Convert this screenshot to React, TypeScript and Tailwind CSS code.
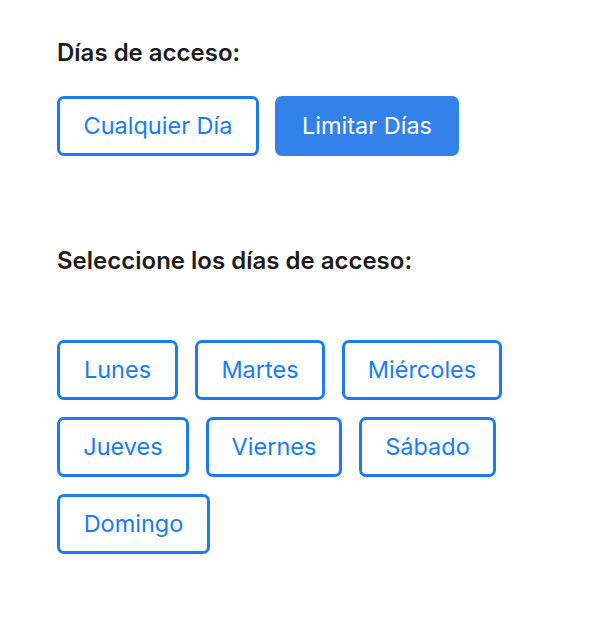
import { useState } from "react";

const days = [
  { name: "Lunes", w: "w-[121px]" },
  { name: "Martes", w: "w-[130px]" },
  { name: "Miércoles", w: "w-[160px]" },
  { name: "Jueves", w: "w-[132px]" },
  { name: "Viernes", w: "w-[136px]" },
  { name: "Sábado", w: "w-[137px]" },
  { name: "Domingo", w: "w-[153px]" },
];

const on = "border-[#3282ea] bg-[#3282ea] text-white";
const off = "border-[#1a7bf2] bg-white text-[#1a7bf2]";

export default function App() {
  const [mode, setMode] = useState<"any" | "limit">("limit");
  const [selected, setSelected] = useState<string[]>([]);

  const toggle = (d: string) =>
    setSelected((s) => (s.includes(d) ? s.filter((x) => x !== d) : [...s, d]));

  return (
    <div
      className="min-h-screen bg-white px-[57px] pt-[38px] text-[#1c1c1e]"
      style={{ fontFamily: "Inter, 'Noto Sans', sans-serif" }}
    >
      <h2 className="text-[24px] font-semibold leading-[30px]">Días de acceso:</h2>

      <div className="mt-[28px] flex gap-[16px]">
        <button
          onClick={() => setMode("any")}
          className={`h-[60px] w-[202px] rounded-[7px] border-[3px] text-[23.5px] ${mode === "any" ? on : off}`}
        >
          Cualquier Día
        </button>
        <button
          onClick={() => setMode("limit")}
          className={`h-[60px] w-[184px] rounded-[7px] border-[3px] text-[23.5px] ${mode === "limit" ? on : off}`}
        >
          Limitar Días
        </button>
      </div>

      <h2 className="mt-[90px] text-[24px] font-semibold leading-[30px]">
        Seleccione los días de acceso:
      </h2>

      <div className="mt-[64px] flex max-w-[460px] flex-wrap gap-x-[17px] gap-y-[17px]">
        {days.map((d) => (
          <button
            key={d.name}
            onClick={() => toggle(d.name)}
            className={`h-[60px] ${d.w} rounded-[7px] border-[3px] text-[23.5px] ${
              selected.includes(d.name) ? on : off
            }`}
          >
            {d.name}
          </button>
        ))}
      </div>
    </div>
  );
}
